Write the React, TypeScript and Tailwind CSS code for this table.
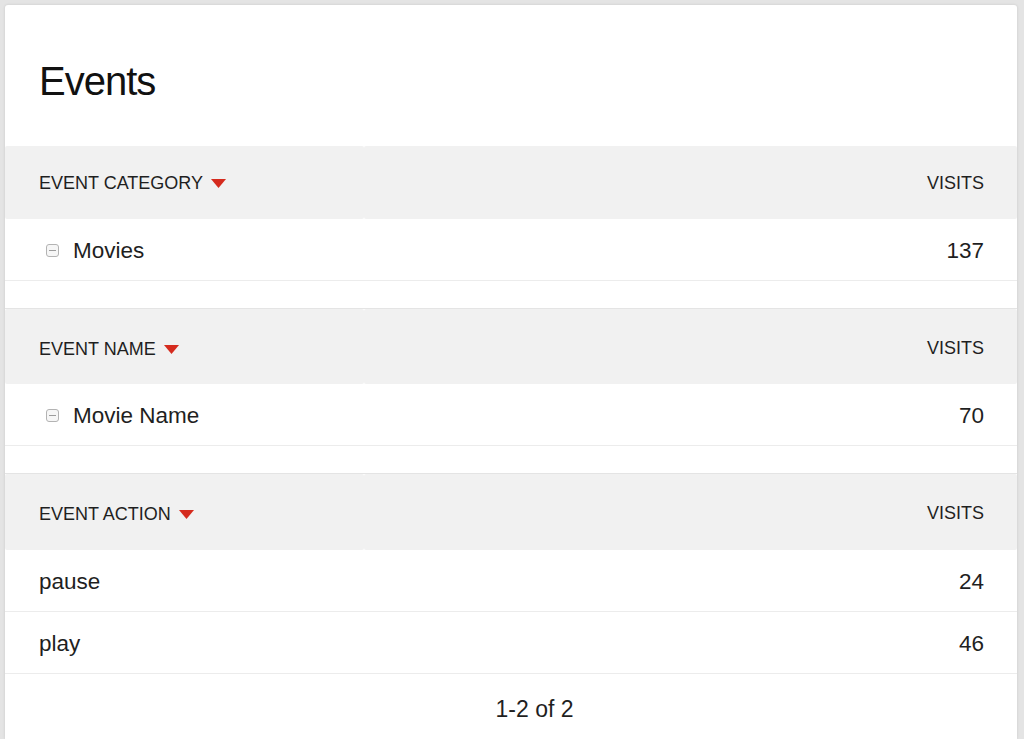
import React from "react";

const font = { fontFamily: '"Liberation Sans", Arial, Helvetica, sans-serif' };

function Caret() {
  return (
    <svg width="15" height="9" viewBox="0 0 15 9" className="ml-[8px] shrink-0">
      <polygon points="0,0 15,0 7.5,9" fill="#d52b1e" />
    </svg>
  );
}

function Collapse() {
  return (
    <span className="ml-[7px] mr-[14px] flex h-[13px] w-[13px] shrink-0 items-center justify-center rounded-[3px] border-[1.5px] border-[#b3b3b3] bg-[#f6f6f6]">
      <span className="h-[1.5px] w-[7px] bg-[#9c9c9c]" />
    </span>
  );
}

function Header({ label, variant }: { label: string; variant: 1 | 2 | 3 }) {
  const outer =
    variant === 1
      ? "flex h-[73px]"
      : variant === 2
      ? "flex h-[76px] border-t border-[#e4e4e4]"
      : "flex h-[77px] border-t border-[#e4e4e4]";
  const left =
    variant === 1
      ? "flex w-[359px] items-center rounded-[2px] bg-[#f1f1f1] pl-[34px] pt-[2px] text-[18px] text-[#1f1f1f]"
      : "flex w-[359px] items-center rounded-[2px] bg-[#f1f1f1] pl-[34px] pt-[5px] text-[18px] text-[#1f1f1f]";
  const right =
    variant === 1
      ? "flex flex-1 items-center justify-end rounded-[2px] bg-[#f1f1f1] pr-[33px] pt-[2px] text-[18px] text-[#1f1f1f]"
      : "flex flex-1 items-center justify-end rounded-[2px] bg-[#f1f1f1] pr-[33px] pt-[3px] text-[18px] text-[#1f1f1f]";
  return (
    <div className={outer}>
      <div className={left}>
        <span>{label}</span>
        <Caret />
      </div>
      <div className={right}>
        <span>VISITS</span>
      </div>
    </div>
  );
}

function Row({ label, value, icon }: { label: string; value: string; icon?: boolean }) {
  return (
    <div className="flex h-[62px] items-center justify-between border-b border-[#ececec] pl-[34px] pr-[33px] pt-[2px] text-[22.5px] text-[#1f1f1f]">
      <div className="flex items-center">
        {icon && <Collapse />}
        <span>{label}</span>
      </div>
      <span>{value}</span>
    </div>
  );
}

export default function App() {
  return (
    <div className="min-h-screen bg-[#e4e4e4] pl-[5px] pr-[7px] pt-[5px]" style={font}>
      <div className="h-[734px] overflow-hidden rounded-t-[3px] bg-white shadow-[0_0_3px_rgba(0,0,0,0.12)]">
        <div className="h-[141px] pl-[34px] pt-[52px]">
          <h1 className="text-[40px] leading-[48px] tracking-[-1px] text-[#111]">Events</h1>
        </div>
        <Header label="EVENT CATEGORY" variant={1} />
        <Row label="Movies" value="137" icon />
        <div className="h-[27px]" />
        <Header label="EVENT NAME" variant={2} />
        <Row label="Movie Name" value="70" icon />
        <div className="h-[27px]" />
        <Header label="EVENT ACTION" variant={3} />
        <Row label="pause" value="24" />
        <Row label="play" value="46" />
        <div className="flex h-[65px] items-center justify-center pl-[47px] pt-[6px] text-[23px] text-[#1f1f1f]">
          1-2 of 2
        </div>
      </div>
    </div>
  );
}
